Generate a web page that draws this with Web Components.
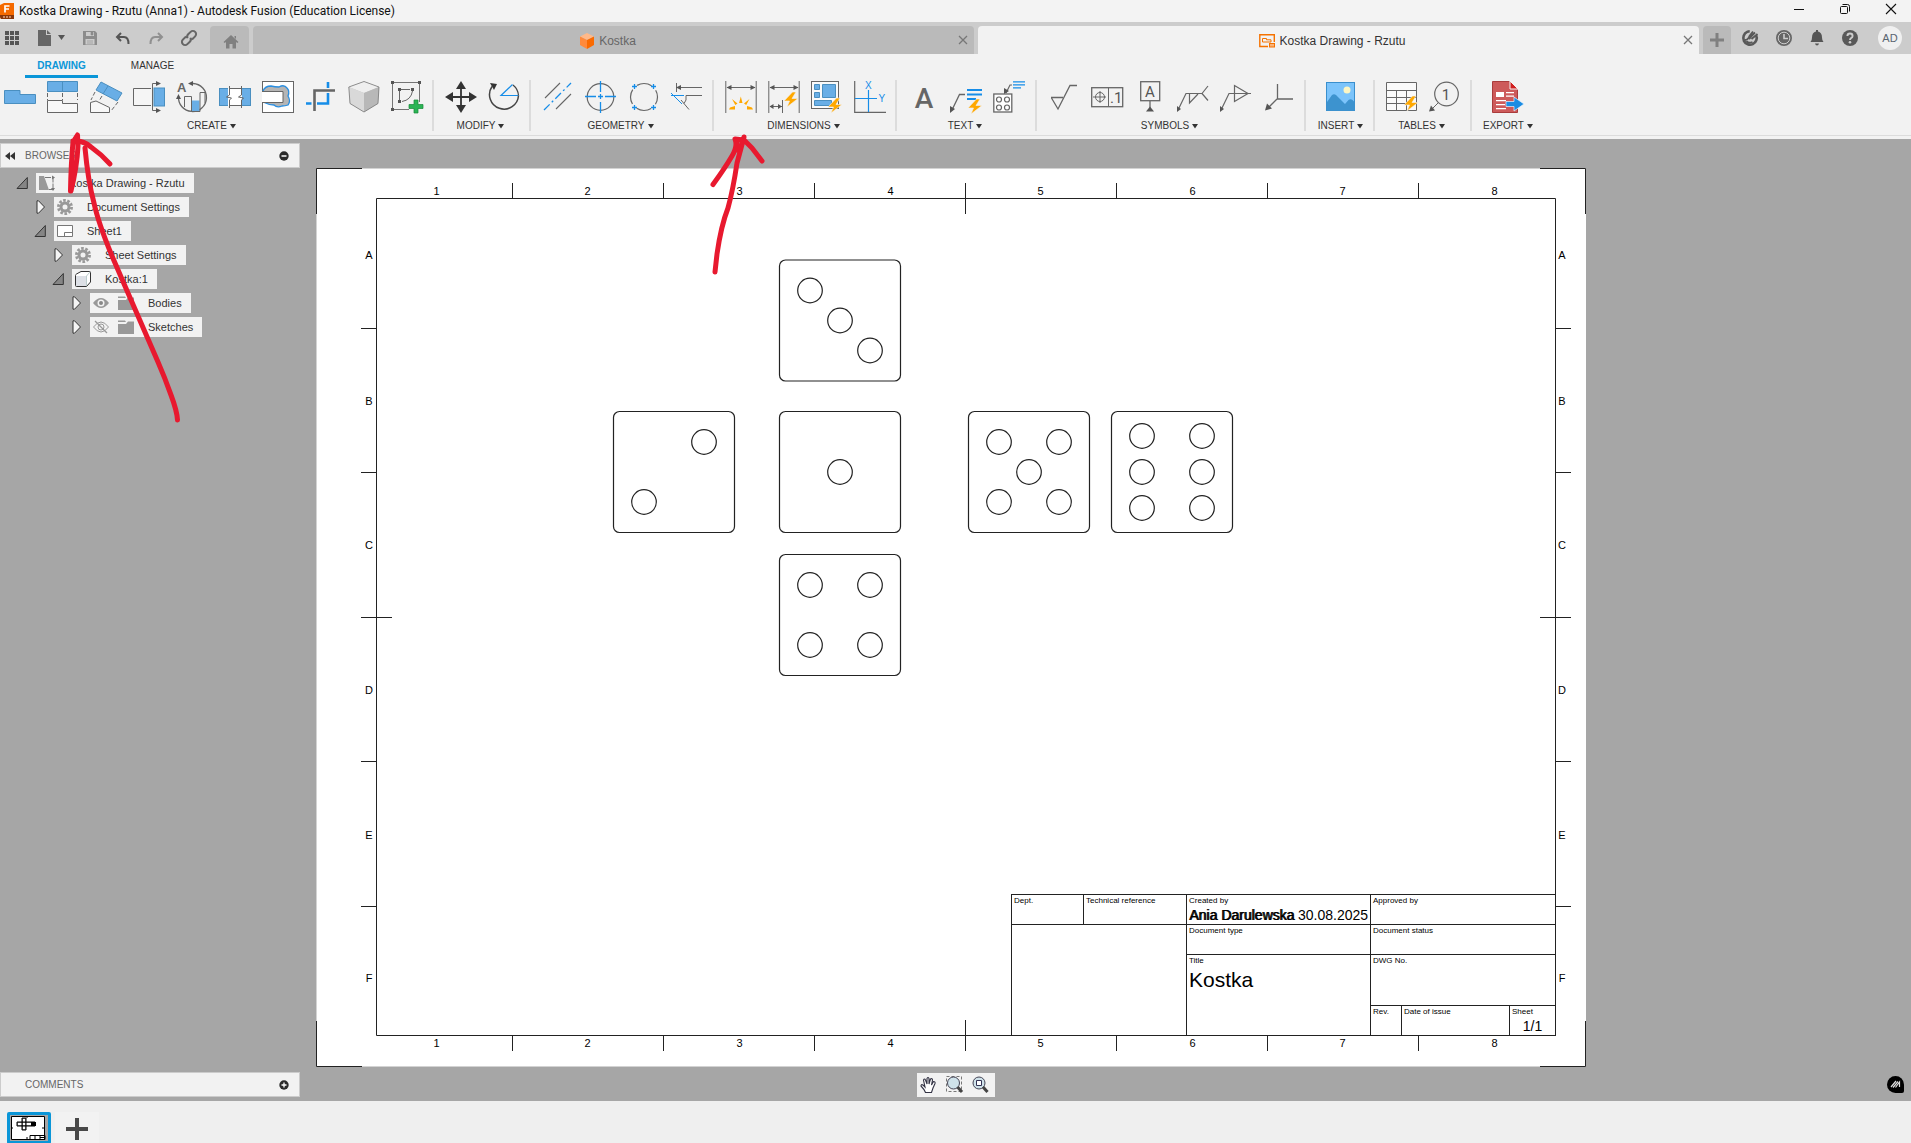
<!DOCTYPE html>
<html lang="en">
<head>
<meta charset="utf-8">
<title>Kostka Drawing - Rzutu (Anna1) - Autodesk Fusion (Education License)</title>
<style>
html,body{height:100%;margin:0}
body{font-family:"Liberation Sans",Arial,sans-serif;font-size:11px;color:#333;overflow:hidden}
</style>
</head>
<body>
<fusion-app></fusion-app>
<script>
const G='fill="none" stroke="#666"';
const BL='fill="#69aee6" stroke="#4a8fc0"';
const bolt=(x,y)=>`<path transform="translate(${x} ${y})" d="M8.500 0L0 9h5.500L3 15 14 6.500H8L12 0z" fill="#ffa800" stroke="#f2f2f2" stroke-width=".6"/>`;
const ICONS={
logo:[14,16,`<path d="M0 2L4 0h10v16H1l-1-2z" fill="#f56a00"/><path d="M0 12h14v4H1l-1-2z" fill="#8a3708"/><path d="M5 9.500V3h4.500M5 6h4" fill="none" stroke="#fff" stroke-width="1.700"/><path d="M3 14h8" stroke="#e0a582" stroke-width="1.500" stroke-dasharray="2 1"/>`],
min:[12,12,'<path d="M1 6.500h10" stroke="#111"/>'],
restore:[12,12,'<rect x="1.500" y="3.500" width="7" height="7" rx="1" fill="none" stroke="#111"/><path d="M3.500 1.500h5q2 0 2 2v5" fill="none" stroke="#111"/>'],
close:[12,12,'<path d="M1 1l10 10M11 1L1 11" stroke="#111" stroke-width="1.100"/>'],
x:[12,12,'<path d="M2 2l8 8M10 2l-8 8" stroke="#777" stroke-width="1.300"/>'],
apps:[14,14,'<path d="M0 0h4v4H0zM5 0h4v4H5zM10 0h4v4h-4zM0 5h4v4H0zM5 5h4v4H5zM10 5h4v4h-4zM0 10h4v4H0zM5 10h4v4H5zM10 10h4v4h-4z" fill="#555"/>'],
file:[14,16,'<path d="M0 0h8v5h5v11H0zM9 0l4 4H9z" fill="#666"/>'],
caret:[8,6,'<path d="M0 0h7L3.500 5z" fill="#555"/>'],
drop:[6,5,'<path d="M0 0h6L3 4.500z" fill="#333"/>'],
save:[14,14,'<path d="M0 0h12l2 2v12H0zM3 1v4h8V1zM2.500 8v5.500h9V8z" fill="#8c8c8c" fill-rule="evenodd"/><path d="M8 1h2v3H8zM4 10h6M4 12h6" fill="#8c8c8c" stroke="#8c8c8c" stroke-width=".6"/>'],
undo:[14,13,'<path d="M5 1L1 5l4 4M1.500 5H8q4.500 0 4.500 7" fill="none" stroke="#555" stroke-width="2"/>'],
redo:[14,13,'<path d="M9 1l4 4-4 4M12.500 5H6q-4.500 0-4.500 7" fill="none" stroke="#909090" stroke-width="2"/>'],
link:[18,18,'<g transform="rotate(-45 9 9)" fill="none" stroke="#666" stroke-width="2"><path d="M8 5.800H3.500a3.200 3.200 0 0 0 0 6.400H7a3 3 0 0 0 3-2.400M10 12.200h4.500a3.200 3.200 0 0 0 0-6.400H11a3 3 0 0 0-3 2.400"/></g>'],
home:[16,14,'<path d="M8 0l7.500 7-1.200 1L13 7v6.500H9.500V9h-3v4.500H3V7L1.700 8 .5 7zM11.500 1H13v3l-1.500-1.400z" fill="#808080"/>'],
cubeo:[16,16,'<path d="M8 0l7 3.500L8 7 1 3.500z" fill="#ffb98a"/><path d="M1 3.500L8 7v9l-7-4z" fill="#ff8a3c"/><path d="M15 3.500L8 7v9l7-4z" fill="#fa6a00"/>'],
draw:[16,14,'<path d="M9 12.500H.8V.8h14.500V8" fill="none" stroke="#f57200" stroke-width="1.400"/><path d="M3.500 4.500h4v1.300H12V8H3.500z" fill="none" stroke="#f57200"/><rect x="10.500" y="9.500" width="5" height="3.500" fill="#f9b37a" stroke="#f57200"/>'],
plus:[14,14,'<path d="M5.500 0h3v5.500H14v3H8.500V14h-3V8.500H0v-3h5.500z" fill="#808080"/>'],
ext:[16,16,'<circle cx="8" cy="8" r="6.700" fill="none" stroke="#595959" stroke-width="2.600" stroke-dasharray="34 9" transform="rotate(-25 8 8)"/><path d="M3 10q3 0 4.500-4L11 1.500M10.500 12q-4 2-6-1M7 9l2-2M8.500 7L13 2.500M9.500 9L15.500 4" fill="none" stroke="#595959" stroke-width="1.800"/>'],
clock:[16,16,'<circle cx="8" cy="8" r="8" fill="#666"/><circle cx="8" cy="8" r="5.800" fill="none" stroke="#ccc"/><path d="M8 4v4.500h4" fill="none" stroke="#ccc" stroke-width="1.600"/>'],
bell:[14,16,'<path d="M6 0h2v1.500q4 1 4 6 0 3 1.500 4.500H.5Q2 10.500 2 7.500q0-5 4-6zM5 13.500h4q-.5 2-2 2t-2-2z" fill="#555"/>'],
help:[16,16,'<circle cx="8" cy="8" r="8" fill="#595959"/><path d="M5.400 6Q5.400 3.500 8 3.500T10.600 6Q10.600 7.300 9 8.200q-1 .6-1 1.800" fill="none" stroke="#ccc" stroke-width="1.900"/><circle cx="8" cy="12.300" r="1.300" fill="#ccc"/>'],
base:[32,32,`<path d="M.5 9.500h15.500v4h15.500v9H.5z" ${BL}/>`],
proj:[32,32,`<path d="M.5.5h30v10H.5zM15.500.5v10" ${BL}/><path d="M.5 12v7M15.500 12v7M30.500 12v7" ${G} stroke-dasharray="4 2"/><path d="M.5 19.500h15v3h15v9H.5z" fill="#f8f8f8" stroke="#666"/>`],
aux:[32,32,`<path d="M11 1l21 11-5 8L6 9z" ${BL}/><path d="M18 5l-5 8" stroke="#4a8fc0"/><path d="M5 11l-4 8M12 15l-3 5M28 21l-7 9" ${G} stroke-dasharray="4 2"/><path d="M.5 31.500v-10L6 20l13.500 6.500v5z" fill="#f8f8f8" stroke="#666"/>`],
sect:[32,32,`<rect x="21" y="7" width="10.500" height="18" ${BL}/><path d="M18 7.500H.5v17H18" fill="#f5f5f5" stroke="#666"/><path d="M24 2.500h-4.500v27H24" ${G}/><path d="M23 0l5 2.500L23 5zM23 27l5 2.500L23 32z" fill="#555"/>`],
detail:[32,32,`<text x="1" y="10.500" font-size="13" font-weight="700" fill="#666">A</text><path d="M17 2.500a14 14 0 1 1-14.500 13" ${G} stroke-width="1.300"/><path d="M17 0v5l-5-2.500zM0 18l2.500-5L5 18z" fill="#555"/><rect x="15.500" y="19.500" width="8" height="11" fill="#69aee6"/><path d="M8.500 26V15.500h7v15h8.500V11.500h5V22" fill="none" stroke="#666"/>`],
brk:[32,32,`<rect x=".5" y="7.500" width="31" height="17" ${BL}/><path d="M9 5h14v22H9z" fill="#fff"/><path d="M9 4h14v3.500H9zM9 25h14v3H9z" fill="#f2f2f2"/><path d="M10.500 5v9l-3 2 5 1-2 2v8M22.500 5v9l-3 2 5 1-2 2v8" fill="none" stroke="#666"/><path d="M11 7.500h11M11 24.500h11" stroke="#666"/>`],
bout:[32,32,`<rect x=".5" y=".5" width="31" height="31" fill="#fff" stroke="#666"/><path d="M1 10Q3 5 9 5q4 1 8 1 5-3 8 1 3 3 1 8 3 5 0 9-3 1-6 1-5 2-8-1-5 0-11-3z" fill="#b5b5b5" stroke="#2a8ee0" stroke-width="1.300"/><path d="M0 10.500h21v11H0" fill="#fff" stroke="#666"/>`],
crop:[32,32,'<path d="M9.500 30V9.500H30" fill="none" stroke="#666" stroke-width="2.600"/><path d="M23 1v6M23 12v10.500H12M1 22.500h5.500" fill="none" stroke="#168de8" stroke-width="2.600"/>'],
cube:[32,32,'<path d="M16 .5L31 6l-1 16.500L16 31 2 22.500.8 6z" fill="#c3c3c3"/><path d="M16 .5L31 6l-15 6L.8 6z" fill="#efefef"/><path d="M16 12l15-6-1 16.500L16 31z" fill="#b8b8b8"/><path d="M16 12L.8 6 2 22.500 16 31z" fill="#d9d9d9"/><path d="M16 .5L31 6l-1 16.500L16 31 2 22.500.8 6z" fill="none" stroke="#777" stroke-width=".8"/>'],
sketch:[32,32,`<path d="M3 1.500h24M1.500 3v24M3 28.500h15M28.500 3v18" ${G} stroke-width=".9"/><path d="M0 0h3v3H0zM27 0h3v3h-3zM0 27h3v3H0zM7 7h3v3H7zM20 7h3v3h-3zM7 19h3v3H7z" fill="#555"/><path d="M10 8.500h9M8.500 10v9M21.500 10Q20 19 11 20.500" ${G}/><path d="M23 19h4v4.500h5v4h-5V32h-4v-4.500h-5v-4h5z" fill="#2bb455" stroke="#148a38" stroke-width=".7"/>`],
move:[32,32,'<path d="M16 4v24M4 16h24" stroke="#333" stroke-width="1.800"/><path d="M16 0l5 8H11zM16 32l5-8H11zM0 16l8-5v10zM32 16l-8-5v10z" fill="#333"/>'],
rot:[32,32,'<path d="M4 5.500A14.500 14.500 0 1 0 30.500 14.500" fill="none" stroke="#444" stroke-width="1.500"/><path d="M2 2l7 1-3 6z" fill="#333"/><path d="M30.500 14.500H13L24.500 3.500" fill="none" stroke="#168de8" stroke-width="1.200"/><path d="M25 4q5 4 5.500 10.500" fill="none" stroke="#444" stroke-width="1.300"/>'],
cl:[32,32,`<path d="M3 17L18 2M14 28l15-15" ${G} stroke-width="1.100"/><path d="M2 29L29 2" stroke="#168de8" stroke-width="1.300" stroke-dasharray="8 3 2 3"/>`],
cm:[32,32,`<circle cx="15.500" cy="16" r="13.300" ${G} stroke-width="1.200"/><path d="M15.500 0v11M15.500 21v11M0 15.500h11M20 15.500h11M13 15.500h5M15.500 13v5" stroke="#168de8" stroke-width="1.300"/>`],
cp:[32,32,`<circle cx="16" cy="16" r="13.500" ${G} stroke-dasharray="15.200 6" stroke-dashoffset="7.600" stroke-width="1.200"/><path d="M4 5.500h5M6.500 3v5M23 5.500h5M25.500 3v5M4 26.500h5M6.500 24v5M23 26.500h5M25.500 24v5" stroke="#168de8" stroke-width="1.300"/>`],
ext2:[32,32,`<path d="M5.500 2v9M5.500 6.500H31M15 14.500h16M10 19l8 9.500M13 22.500q3-3 2-8" ${G}/><path d="M5 6.500l5-2.500v5z" fill="#555"/><path d="M0 12l11 11M0 14.500h13" stroke="#168de8"/>`],
dim:[32,32,`<path d="M.8 0v32M31.200 0v32M2 6.500h28" ${G}/><path d="M1.500 6.500l5-2.500v5zM30.500 6.500l-5-2.500v5z" fill="#555"/><path d="M15.800 15.500l1.700 6.500h-3.400zM7 18l5.500 4.500-2.200 1.500zM24.500 18L19 22.500l2.200 1.500zM4 28.500l1-2 5-1.500v3.500zM28 28.500l-1-2-5-1.500v3.500z" fill="#ffa800"/>`],
dim2:[32,32,`<path d="M.8 0v32M31.200 0v32M2 6.500h28M14.500 19v13M2 25.500h12" ${G}/><path d="M1.500 6.500l5-2.500v5zM30.500 6.500l-5-2.500v5zM1.500 25.500l4-2.500v5zM14 25.500l-4-2.500v5z" fill="#555"/>${bolt(16,11)}`],
dim3:[32,32,`<rect x=".5" y=".5" width="27" height="27" fill="#fafafa" stroke="#666"/><path d="M3.500 3.500h5v5h-5zM11.500 3.500h13v13h-13zM3.500 11.500h5v5h-5zM3.500 19.500h17v5h-17z" ${BL}/>${bolt(17,17)}`],
ord:[32,32,`<path d="M.7 0v31.300H32" ${G} stroke-width="1.200"/><path d="M14.500 9v22M1 17.500h22" stroke="#168de8" stroke-width="1.200"/><text x="11" y="7.500" font-size="10" fill="#168de8">X</text><text x="24.500" y="21" font-size="10" fill="#168de8">Y</text>`],
text:[32,38,'<text x="16" y="30" font-family="Roboto,sans-serif" font-size="28" font-weight="500" text-anchor="middle" fill="#666">A</text>'],
leader:[34,32,`<path d="M2 29L9.500 13.500H15" ${G} stroke-width="1.300"/><path d="M0 32v-7l5 3z" fill="#555"/><path d="M17 9h15M17 13.500h15M17 18h9" stroke="#168de8" stroke-width="2"/>${bolt(18,18)}`],
bom:[34,32,`<rect x=".8" y="13" width="18" height="18" fill="#fff" stroke="#666" stroke-width="1.300"/><g ${G} stroke-width="1.200"><circle cx="6" cy="18.500" r="2.500"/><circle cx="14" cy="18.500" r="2.500"/><circle cx="6" cy="26.500" r="2.500"/><circle cx="14" cy="26.500" r="2.500"/><path d="M13 12l4-8h2"/></g><path d="M11 7l5 3-5 3z" fill="#555"/><path d="M20 .8h12M20 3.800h12M20 6.800h8" stroke="#168de8" stroke-width="1.200"/>`],
surf:[32,32,`<path d="M3 16.500h12M3.500 17l6.500 11L22 4.500h7" ${G} stroke-width="1.300"/>`],
gdt:[32,32,`<rect x=".7" y="6.700" width="31" height="19" ${G} stroke-width="1.300"/><path d="M17.500 7v18.500M2 16h13M9 10v12" ${G}/><circle cx="9" cy="16" r="4.500" ${G}/><text x="19" y="22" font-size="15" fill="#555" font-family="Roboto">.1</text>`],
datum:[32,32,`<rect x="6.700" y=".7" width="19" height="19" ${G} stroke-width="1.300"/><text x="16" y="16" font-size="15" text-anchor="middle" font-family="Roboto" fill="#555">A</text><path d="M16 20v8" ${G} stroke-width="1.300"/><path d="M12 30.500l4-5 4 5z" fill="#555"/>`],
weld:[32,32,`<path d="M2 27l7-14.500h16L31 5M25 12.500l6 7M12.500 13v9L21 13" ${G} stroke-width="1.200"/><path d="M0 31v-6l4 3z" fill="#555"/>`],
taper:[32,32,`<path d="M2 27l7-14.500h22M14.500 4.500v16L28 12.500z" ${G} stroke-width="1.200"/><path d="M0 31v-6l4 3z" fill="#555"/>`],
bend:[32,32,`<path d="M14.500 3v15h15.500M14 18L5 27" ${G} stroke-width="1.300"/><path d="M2 29.500l2-7 5 5z" fill="#555"/>`],
img:[32,32,'<rect x="1.500" y="1.500" width="28" height="28" fill="#7cc4fb" stroke="#3a8fcd"/><path d="M2 21l5-7q2-1.500 4 0l9 9 3.500-4q2-1.500 4 0l2 2v8.500H2z" fill="#3d93cf"/><circle cx="22" cy="9" r="3.500" fill="#fdf6c3"/>'],
table:[32,32,`<path d="M.5 1.500h30v28H.5zM.5 9.500h30M.5 16.500h30M.5 22.500h30M10.500 9.500v20M20.500 9.500v20" fill="#fafafa" stroke="#666"/>${bolt(18,15)}`],
balloon:[32,32,`<circle cx="17.500" cy="13" r="11.800" ${G} stroke-width="1.200"/><path d="M9 22l-6 6" ${G}/><path d="M0 30.500l2-6 4 5z" fill="#555"/><text x="17" y="18.500" text-anchor="middle" font-size="15" font-family="Roboto" fill="#555">1</text>`],
pdf:[32,32,'<path d="M.5.5h17l8 8V31.500H.5z" fill="#cd5a5a" stroke="#a93c3c"/><path d="M18 0l8 8h-8z" fill="#d01f1f" stroke="#f2f2f2"/><path d="M4 11h8v5H4zM14 11h8v1.200h-8zM14 14.500h8v1.200h-8zM4 19h10v1.200H4zM4 23h9v1.200H4zM4 27h10v1.200H4z" fill="#fff"/><path d="M14 20.500h8V16l10 7-10 7v-4.500h-8z" fill="#1b8ce3" stroke="#eaf4fc" stroke-width=".7"/>'],
collapse:[12,8,'<path d="M5 0v8L0 4zM10 0v8L5 4z" fill="#333"/>'],
minus:[10,10,'<circle cx="5" cy="5" r="4.700" fill="#2b2b2b"/><path d="M2.500 5h5" stroke="#fff" stroke-width="1.500"/>'],
add:[10,10,'<circle cx="5" cy="5" r="4.700" fill="#2b2b2b"/><path d="M2.500 5h5M5 2.500v5" stroke="#fff" stroke-width="1.300"/>'],
open:[12,14,'<path d="M11.300 1.500v11H1z" fill="#858585" stroke="#333"/>'],
shut:[12,14,'<path d="M3 .8h1.500L10.500 7l-6 6.200H3z" fill="#f4f4f4" stroke="#333"/>'],
doc:[16,16,'<path d="M0 1h5l5 14H0z" fill="#999"/><path d="M6 2.500h8v11M10 14.500h5" fill="none" stroke="#777" stroke-dasharray="6 1"/><path d="M13 .5l3 2-3 2zM12 13h4l-2 3z" fill="#777"/>'],
gear:[16,16,'<circle cx="8" cy="8" r="6.600" fill="none" stroke="#999" stroke-width="2.800" stroke-dasharray="2.600 1.550"/><circle cx="8" cy="8" r="4" fill="none" stroke="#999" stroke-width="3"/>'],
sheet:[16,12,'<path d="M.5.500h15v11H.5z" fill="#fff" stroke="#777"/><path d="M7.500 11V7.500h8" fill="none" stroke="#777"/>'],
body:[16,16,'<path d="M.5 4.500q0-1 1-1.500L6 .5h8.500q1 0 1 1V11l-4 4.500h-10q-1 0-1-1z" fill="#fff" stroke="#333"/><path d="M1 5h10.500v10H1z" fill="#dde0e6"/><path d="M11.500 5v10M11.500 5L15 1" stroke="#bcc" fill="none"/>'],
eye:[16,12,'<path d="M0 6Q8-4 16 6 8 16 0 6z" fill="#999"/><circle cx="8" cy="6" r="3.500" fill="#f2f2f2"/><circle cx="8" cy="6" r="2" fill="#888"/>'],
eyeoff:[16,12,'<path d="M.5 6Q8-4 15.500 6 8 16 .5 6z" fill="none" stroke="#999"/><circle cx="8" cy="6" r="3" fill="none" stroke="#999"/><path d="M2 0l12 12" stroke="#999" stroke-width="1.300"/>'],
folder:[16,14,'<path d="M0 .5h7l1 1.500H0zM0 4h8l2-2.500h6V14H0z" fill="#999"/>'],
hand:[18,18,'<path d="M5.500 16.500q-1-3-4.500-6.500 0-2 2-1l2 2-1.500-7q1-2 2 0L7 8V2.500q1-2 2 0V8l1.500-5q2-1 2 1L11.500 9l2-3.500q2 0 1.500 2L13 12l-1.500 4.500z" fill="#fff" stroke="#334" stroke-width="1.100"/>'],
zoomw:[18,18,'<path d="M.5.5h15v15H.5z" fill="none" stroke="#777" stroke-dasharray="3 2"/><circle cx="7.500" cy="7" r="6" fill="#cfe2ea" stroke="#445"/><path d="M11.500 11l4.500 5" stroke="#444" stroke-width="3"/>'],
zoomf:[18,18,'<circle cx="7" cy="7" r="6" fill="#cfe2ea" stroke="#445"/><path d="M4.500 4.500h5v5h-5z" fill="#fff" stroke="#335"/><path d="M11 11l4.500 5" stroke="#444" stroke-width="3"/>'],
assist:[17,17,'<path d="M8.500 0A8.500 8.500 0 1 0 8.500 17H15q2 0 2-2V8.500A8.500 8.500 0 0 0 8.500 0z" fill="#000"/><path d="M4 11l5-6M6 11.500l5-6M8.500 11.500l4-5.500v5" fill="none" stroke="#ddd" stroke-width="1.200"/>'],
bigplus:[22,22,'<path d="M9 0h4v9h9v4h-9v9H9v-9H0V9h9z" fill="#484848"/>'],
thumb:[38,26,'<path d="M0 0h38v26H0z" fill="#a6a6a6"/><path d="M1.500 1.500h33v23h-33z" fill="#fff" stroke="#000"/><path d="M17 1v2M1 13h2M32 13h2M17 22v3" stroke="#000"/><path d="M7 7h18v4H7zM12 3h4v12h-4z" fill="#fff" stroke="#000"/><path d="M7.500 7.500h14v3h-14zM12.500 3.500h3v11h-3z" fill="none" stroke="#000" stroke-dasharray="1 1"/><path d="M21 7h5v4h-5z"/><path d="M20 20.500h15v4H20zM25 21v4M30 21v4M30 22.500h5" fill="none" stroke="#000"/>']
};
const define=(tag,css,html)=>customElements.define(tag,class extends HTMLElement{
  constructor(){super();this.attachShadow({mode:'open'});}
  connectedCallback(){
    if(this.shadowRoot.childNodes.length)return;
    const t=document.createElement('template');
    t.innerHTML=`<style>*{box-sizing:border-box}:host{display:block;box-sizing:border-box}button{font:inherit;color:inherit;border:0;padding:0;margin:0;background:none;display:flex;align-items:center;justify-content:center}${css}</style>`+(typeof html==='function'?html(this):html);
    this.shadowRoot.append(t.content.cloneNode(true));
  }
});

define('fx-icon',':host{display:inline-flex;flex:none}svg{display:block;overflow:visible}',e=>{
  const [w,h,b]=ICONS[e.getAttribute('name')];
  return `<svg width="${w}" height="${h}" viewBox="0 0 ${w} ${h}" font-family="Liberation Sans,sans-serif" aria-hidden="true">${b}</svg>`;});

define('tool-button',':host{flex:none;width:var(--tool-width,32px)}button{width:100%;height:var(--tool-height,32px);overflow:visible}',
  e=>`<button type="button" aria-label="${e.getAttribute('label')}"><fx-icon name="${e.getAttribute('icon')}"></fx-icon></button>`);

define('ribbon-group',`:host{flex:none;display:flex;flex-direction:column;align-items:center;min-width:69px;height:51px;padding:0 9px 0 11px;border-right:2px solid #dcdcdc}
:host([first]){padding-left:4px}:host([last]){border:0}
.tools{flex:none;display:flex;gap:11px;height:39px;padding-top:1px}
.name{flex:none;height:14px;gap:3px;margin:0 2px 0 -2px;font-size:10px;line-height:14px;color:#333;white-space:nowrap}
:host([single]) .name,:host([last]) .name{margin:0}`,
  e=>`<div class="tools"><slot></slot></div><button type="button" class="name">${e.getAttribute('name')}<fx-icon name="drop"></fx-icon></button>`);

define('title-bar',`:host{display:flex;align-items:center;height:22px;background:#f3f3f3;color:#111}
fx-icon.logo{margin-right:5px}
h1{flex:1;margin:0;font:400 12px/18px Roboto,"Open Sans",sans-serif}
.win{display:flex;gap:34px;padding:0 14px 4px 0}`,
`<fx-icon class="logo" name="logo"></fx-icon><h1>Kostka Drawing - Rzutu (Anna1) - Autodesk Fusion (Education License)</h1>
<div class="win"><button type="button" aria-label="Minimize"><fx-icon name="min"></fx-icon></button><button type="button" aria-label="Restore"><fx-icon name="restore"></fx-icon></button><button type="button" aria-label="Close"><fx-icon name="close"></fx-icon></button></div>`);

define('doc-tab',`:host{flex:1;display:flex;align-items:center;height:28px;padding:0 5px;border-radius:4px 4px 0 0;background:#bababa;color:#666;font-size:12px}
:host([active]){background:#f2f2f2;color:#333}
.t{flex:1;height:28px;gap:4px;padding-top:2px;white-space:nowrap}`,
e=>`<button type="button" class="t"><fx-icon name="${e.getAttribute('icon')}"></fx-icon><slot></slot></button><button type="button" aria-label="Close tab"><fx-icon name="x"></fx-icon></button>`);

define('tab-strip',`:host{display:flex;align-items:flex-end;gap:4px;height:32px;background:#ccc}
.quick{flex:none;width:206px;height:32px;display:flex;align-items:center;padding-left:5px}
.quick button{height:24px}
.file{gap:6px;margin:0 17px 0 19px}.undo{margin:0 19px}.link{margin-left:17px}
.sq{flex:none;height:28px;background:#bababa;border-radius:4px 4px 0 0}.home{width:39px;padding:4px 0 0 3px}.new{width:28px}
.user{flex:none;width:176px;height:32px;display:flex;align-items:center;justify-content:flex-end;gap:18px;padding-right:9px}
.avatar{width:24px;height:24px;border-radius:50%;background:#f0f0f0;font-size:11px;color:#5a6570}
.help{margin-right:2px}`,
`<div class="quick"><button type="button" aria-label="Apps"><fx-icon name="apps"></fx-icon></button><button type="button" class="file" aria-label="File"><fx-icon name="file"></fx-icon><fx-icon name="caret"></fx-icon></button><button type="button" aria-label="Save"><fx-icon name="save"></fx-icon></button><button type="button" class="undo" aria-label="Undo"><fx-icon name="undo"></fx-icon></button><button type="button" aria-label="Redo"><fx-icon name="redo"></fx-icon></button><button type="button" class="link" aria-label="Link"><fx-icon name="link"></fx-icon></button></div>
<button type="button" class="sq home" aria-label="Home"><fx-icon name="home"></fx-icon></button>
<doc-tab icon="cubeo">Kostka</doc-tab><doc-tab icon="draw" active>Kostka Drawing - Rzutu</doc-tab>
<button type="button" class="sq new" aria-label="New tab"><fx-icon name="plus"></fx-icon></button>
<div class="user"><button type="button" aria-label="Extensions"><fx-icon name="ext"></fx-icon></button><button type="button" aria-label="Job status"><fx-icon name="clock"></fx-icon></button><button type="button" aria-label="Notifications"><fx-icon name="bell"></fx-icon></button><button type="button" class="help" aria-label="Help"><fx-icon name="help"></fx-icon></button><button type="button" class="avatar">AD</button></div>`);

const GROUPS=[
['CREATE','first',['base','proj','aux','sect','detail','brk','bout','crop','cube','sketch']],
['MODIFY','',['move','rot']],['GEOMETRY','',['cl','cm','cp','ext2']],['DIMENSIONS','',['dim','dim2','dim3','ord']],
['TEXT','',['text','leader','bom']],['SYMBOLS','',['surf','gdt','datum','weld','taper','bend']],
['INSERT','single',['img']],['TABLES','',['table','balloon']],['EXPORT','last',['pdf']]];
define('tool-ribbon',`:host{height:85px;background:#f2f2f2;padding-bottom:3px}
.in{height:82px;border-bottom:1px solid #dcdcdc}
nav{display:flex;gap:18px;height:26px;padding:0 0 2px 25px}
nav button{width:73px;height:24px;padding-top:1px;border-bottom:3px solid transparent;color:#333;font-size:10px}
nav button.on{border-color:#0a96d8;color:#0a96d8;font-weight:700}
.groups{display:flex}`,
`<div class="in"><nav><button type="button" class="on">DRAWING</button><button type="button">MANAGE</button></nav><div class="groups">${GROUPS.map(([n,a,t])=>`<ribbon-group name="${n}" ${a}>${t.map((i,k)=>`<tool-button icon="${i}" label="${n} ${k+1}"></tool-button>`).join('')}</ribbon-group>`).join('')}</div></div>`);

define('panel-header',`:host{display:flex;align-items:center;width:300px;height:25px;padding:0 10px 0 4px;border:1px solid #ccc;background:#f2f2f2;color:#666;font-size:10px}
.l{width:20px;display:flex}span{flex:1}`,
e=>`<div class="l">${e.hasAttribute('fold')?'<button type="button" aria-label="Collapse"><fx-icon name="collapse"></fx-icon></button>':''}</div><span><slot></slot></span><button type="button" aria-label="Toggle panel"><fx-icon name="${e.getAttribute('icon')}"></fx-icon></button>`);

define('tree-node',`:host{display:flex;align-items:center;gap:8px;height:20px;padding-left:calc(16px + 18px*var(--level))}
.chip{height:20px;padding:0 9px 0 3px;background:#f2f2f2;color:#333;font-size:11px;white-space:nowrap}
.chip fx-icon{width:16px;margin-right:9px;justify-content:center}.chip fx-icon:last-of-type{margin-right:14px}`,
e=>`<button type="button" aria-label="Expand"><fx-icon name="${e.hasAttribute('open')?'open':'shut'}"></fx-icon></button><button type="button" class="chip">${e.getAttribute('icons').split(' ').map(i=>`<fx-icon name="${i}"></fx-icon>`).join('')}<slot></slot></button>`);

define('browser-panel',`:host{padding-top:4px}.tree{display:flex;flex-direction:column;gap:4px;padding-top:5px}`,
`<panel-header fold icon="minus">BROWSER</panel-header><div class="tree">
<tree-node open icons="doc" style="--level:0">Kostka Drawing - Rzutu</tree-node>
<tree-node icons="gear" style="--level:1">Document Settings</tree-node>
<tree-node open icons="sheet" style="--level:1">Sheet1</tree-node>
<tree-node icons="gear" style="--level:2">Sheet Settings</tree-node>
<tree-node open icons="body" style="--level:2">Kostka:1</tree-node>
<tree-node icons="eye folder" style="--level:3">Bodies</tree-node>
<tree-node icons="eyeoff folder" style="--level:3">Sketches</tree-node></div>`);

define('title-block',`:host{display:grid;width:545px;height:142px;grid-template-columns:72px 103px 184px 31px 108px 46px;grid-template-rows:30px 30px 51px 30px;border:solid #222;border-width:1px 0 0 1px;color:#000;background:#fff}
div{border:solid #222;border-width:0 1px 1px 0;padding:0 0 0 2px;font-size:8px;line-height:11px;white-space:nowrap}
b{display:block;font-weight:400;font-size:14px;line-height:18px}
.name{text-shadow:1px 0 #000}.title{font-size:21px;line-height:28px}.num{text-align:center;padding-right:2px}`,
`<div>Dept.</div><div>Technical reference</div><div>Created by<b><span class="name">Ania Darulewska</span> 30.08.2025</b></div><div style="grid-column:4/7">Approved by</div>
<div style="grid-area:2/1/5/3"></div><div>Document type</div><div style="grid-column:4/7">Document status</div>
<div style="grid-area:3/3/5/4">Title<b class="title">Kostka</b></div><div style="grid-area:3/4/4/7">DWG No.</div>
<div>Rev.</div><div>Date of issue</div><div>Sheet<b class="num">1/1</b></div>`);

const DICE=[[779.5,260,[[30.5,30.5],[60.5,60.5],[90.5,90.5]]],[613.5,411.5,[[90.5,30.5],[30.5,90.5]]],[779.5,411.5,[[60.5,60.5]]],
[968.5,411.5,[[30.5,30.5],[90.5,30.5],[60.5,60.5],[30.5,90.5],[90.5,90.5]]],[1111.5,411.5,[[30.5,24.5],[90.5,24.5],[30.5,60.5],[90.5,60.5],[30.5,96.5],[90.5,96.5]]],
[779.5,554.5,[[30.5,30.5],[90.5,30.5],[30.5,90.5],[90.5,90.5]]]];
const die=([x,y,p])=>`<g transform="translate(${x} ${y})"><rect width="121" height="121" rx="6"/>${p.map(([a,b])=>`<circle cx="${a}" cy="${b}" r="12.300"/>`).join('')}</g>`;
const tx=[512.5,663.5,814.5,965.5,1116.5,1267.5,1418.5],ty=[328.5,472.5,617.5,761.5,906.5];
const ticks=tx.map(x=>x===965.5?`M${x} 183V214M${x} 1020V1051`:`M${x} 183V198M${x} 1036V1051`).join('')+ty.map(y=>y===617.5?`M361 ${y}H392M1540 ${y}H1571`:`M361 ${y}H376M1555 ${y}H1571`).join('');
const nums=[436.5,587.5,739.5,890.5,1040.5,1192.5,1342.5,1494.5].map((x,i)=>`<text x="${x}" y="195">${i+1}</text><text x="${x}" y="1047">${i+1}</text>`).join('');
const lets=[255,401,545,690,835,978].map((y,i)=>`<text x="369" y="${y+4}">${'ABCDEF'[i]}</text><text x="1562" y="${y+4}">${'ABCDEF'[i]}</text>`).join('');
define('drawing-sheet',`:host{display:grid}
svg,title-block{grid-area:1/1}svg{display:block;width:100%;height:auto}
title-block{place-self:end;margin:0 31px 31px 0}`,
`<svg viewBox="316 168 1271 899"><path d="M316.5 168.5H1586V1066.5H316.5z" fill="#fff"/>
<g fill="none" stroke="#222"><path d="M376.5 198.5H1555.5V1035.5H376.5z"/><path d="${ticks}"/><path d="M316.5 214V168.5H362M1540 168.5H1585.5V214M316.5 1021V1066.5H362M1540 1066.5H1585.5V1021"/></g>
<g fill="none" stroke="#222" stroke-width="1.200">${DICE.map(die).join('')}</g>
<g fill="#000" font-family="Liberation Sans,sans-serif" font-size="11" text-anchor="middle">${nums}${lets}</g></svg><title-block></title-block>`);

define('view-tools',`:host{display:flex;align-items:center;gap:2px;width:78px;height:24px;background:#f2f2f2;--tool-width:24px;--tool-height:24px}`,
`<tool-button icon="hand" label="Pan"></tool-button><tool-button icon="zoomw" label="Zoom window"></tool-button><tool-button icon="zoomf" label="Fit"></tool-button>`);

define('work-space',`:host{flex:1;min-height:0;display:flex;flex-direction:column;background:#a6a6a6}
.main{flex:1;min-height:0;display:grid;grid-template-columns:300px 16px 1271fr 324fr}
drawing-sheet{grid-column:3;margin-top:29px;align-self:start}
.bar{display:grid;grid-template-columns:1fr auto 1fr;align-items:center;padding-bottom:4px}
.bar>button{justify-self:end;margin-right:7px}`,
`<div class="main"><browser-panel></browser-panel><drawing-sheet></drawing-sheet></div>
<div class="bar"><panel-header icon="add">COMMENTS</panel-header><view-tools></view-tools><button type="button" aria-label="Assistant"><fx-icon name="assist"></fx-icon></button></div>`);

define('sheet-bar',`:host{flex:none;display:flex;gap:4px;height:42px;padding:11px 0 0 7px;background:#efefef;overflow:hidden}
.thumb{flex:none;width:44px;height:32px;border:3px solid #0a96d8;border-radius:2px}
.new{flex:none;width:44px;height:34px;background:#f2f2f2}`,
`<button type="button" class="thumb" aria-label="Sheet1"><fx-icon name="thumb"></fx-icon></button><button type="button" class="new" aria-label="Add sheet"><fx-icon name="bigplus"></fx-icon></button>`);

define('ink-overlay',`:host{position:absolute;inset:0;pointer-events:none}svg{display:block}`,
`<svg width="800" height="440" fill="none" stroke="#e8192f" stroke-width="5" stroke-linecap="round" stroke-linejoin="round">
<path d="M177.500 420Q177 411 171 395 165 378 158 362L128 293 112 256Q98 222 94 203 88 181 85 148"/>
<path d="M70.500 191Q71 164 73 142L77.500 135 78 146Q77 167 71 191M73 141Q83 140 91 147 101 154 110 164"/>
<path d="M715 272L717 254Q721 226 728 208 733 190 737 163L744 137M713 184.500Q725 168 732 156 738 146 735 139L744 140 752 148 762 161M737 140L737 150"/></svg>`);

define('fusion-app',`:host{position:relative;display:flex;flex-direction:column;height:100vh;min-height:600px}`,
`<title-bar></title-bar><tab-strip></tab-strip><tool-ribbon></tool-ribbon><work-space></work-space><sheet-bar></sheet-bar><ink-overlay></ink-overlay>`);
</script>
</body>
</html>
